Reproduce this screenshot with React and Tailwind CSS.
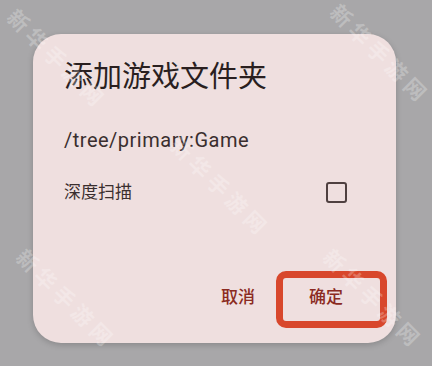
import React from "react";

const marks = [
  { left: 56, top: 60 },
  { left: 379, top: 55 },
  { left: 219, top: 188 },
  { left: 65, top: 300 },
  { left: 372, top: 300 },
];

function Watermark({ left, top }) {
  return (
    <span
      className="pointer-events-none absolute -translate-x-1/2 -translate-y-1/2 rotate-45 whitespace-nowrap text-[21px] font-bold leading-none tracking-[5px] text-white/25"
      style={{ left, top }}
    >
      新华手游网
    </span>
  );
}

export default function App() {
  return (
    <div
      className="relative h-[366px] w-[432px] overflow-hidden bg-[#a8a7a9] pl-[33px] pt-[34px]"
      style={{ fontFamily: "Roboto, 'Noto Sans CJK SC', sans-serif" }}
    >
      <div className="flex h-[309px] w-[363px] flex-col rounded-[28px] bg-[#efdfdf] pl-[31px] shadow-[0_2px_6px_rgba(0,0,0,0.18)]">
        <h1 className="mt-[25px] text-[29px] leading-[36px] text-[#2a1f1f]">添加游戏文件夹</h1>
        <p className="mt-[33px] text-[20px] leading-[24px] tracking-[0.5px] text-[#3a2e2e]">/tree/primary:Game</p>
        <div className="mt-[28px] flex items-center justify-between pr-[49px]">
          <span className="text-[17px] leading-[24px] text-[#3a2e2e]">深度扫描</span>
          <span className="h-[21px] w-[21px] rounded-[3px] border-[2.5px] border-[#4f4040]" />
        </div>
        <div className="mt-auto flex justify-end gap-[54px] pb-[34px] pr-[53px] text-[17px] font-medium leading-[24px] text-[#8b2b22]">
          <button>取消</button>
          <button>确定</button>
        </div>
      </div>
      <div className="pointer-events-none absolute left-[276px] top-[271px] h-[57px] w-[111px] rounded-[10px] border-[7px] border-[#d8472c]" />
      {marks.map((m, i) => (
        <Watermark key={i} {...m} />
      ))}
    </div>
  );
}
